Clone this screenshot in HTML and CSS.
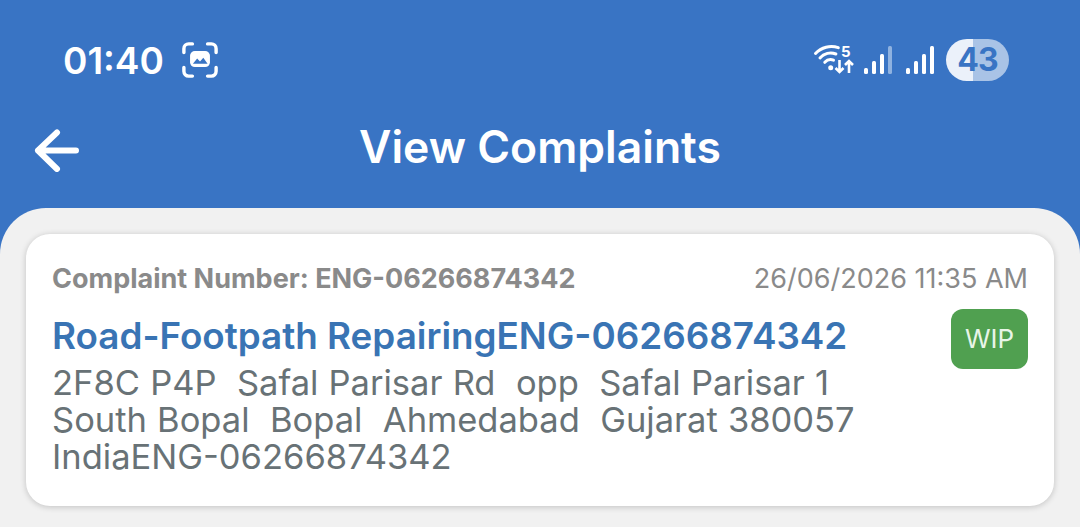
FILE: index.html
```html
<!DOCTYPE html>
<html lang="en">
<head>
    <meta charset="UTF-8">
    <meta name="viewport" content="width=device-width, initial-scale=1.0">
    <title>View Complaints</title>
    <link rel="stylesheet" href="styles.css">
</head>
<body>
    <div class="topbar">
        <div class="status">
            <span class="time">01:40</span>
            <svg class="shot" width="36" height="36" viewBox="0 0 38 38" fill="none">
                <path d="M2 11V7a5 5 0 0 1 5-5h4M27 2h4a5 5 0 0 1 5 5v4M36 27v4a5 5 0 0 1-5 5h-4M11 36H7a5 5 0 0 1-5-5v-4" stroke="#fff" stroke-width="3.6" stroke-linecap="round"/>
                <rect x="8.500" y="9.500" width="21" height="17" rx="5" fill="#fff"/>
                <path d="M11.500 23l4.500-5.500 3 3 3.500-4 4.500 6.500z" fill="#3974c4"/>
            </svg>
            <div class="status-right">
                <svg class="wifi" width="40" height="32" viewBox="0 0 40 32" fill="none">
                    <path d="M0.500 9.500A21.400 21.400 0 0 1 23.300 3.700M5 13.900A14.500 14.500 0 0 1 20.900 10M9.800 18.300A8 8 0 0 1 18.500 16.200" stroke="#fff" stroke-width="3" stroke-linecap="round"/>
                    <circle cx="15.700" cy="23.700" r="2.500" fill="#fff"/>
                    <path d="M24.500 16v12M20.500 24l4 4 4-4M34 29V17M30 21l4-4 4 4" stroke="#fff" stroke-width="2.600"/>
                    <text x="26" y="13" class="five">5</text>
                </svg>
                <svg class="bars" width="30" height="30" viewBox="0 0 30 30">
                    <rect x="0" y="23" width="4" height="6" rx="1.500" fill="#fff"/>
                    <rect x="8" y="16" width="4" height="13" rx="1.500" fill="#fff"/>
                    <rect x="16" y="9" width="4" height="20" rx="1.500" fill="#fff"/>
                    <rect x="24" y="1" width="4" height="28" rx="1.500" fill="#8fb2e0"/>
                </svg>
                <svg class="bars bars-sim" width="30" height="30" viewBox="0 0 30 30">
                    <rect x="0" y="23" width="4" height="6" rx="1.500" fill="#fff"/>
                    <rect x="8" y="16" width="4" height="13" rx="1.500" fill="#fff"/>
                    <rect x="16" y="9" width="4" height="20" rx="1.500" fill="#fff"/>
                    <rect x="24" y="1" width="4" height="28" rx="1.500" fill="#fff"/>
                </svg>
                <div class="battery">43</div>
            </div>
        </div>
        <div class="titlebar">
            <svg class="back" width="48" height="44" viewBox="0 0 48 44" fill="none">
                <path d="M42 22.500H4M23 4.500L4 22.500l19 18.500" stroke="#fff" stroke-width="6" stroke-linecap="round" stroke-linejoin="round"/>
            </svg>
            <h1>View Complaints</h1>
        </div>
    </div>

    <div class="sheet">
        <div class="card">
            <div class="card-head">
                <span class="number">Complaint Number: ENG-06266874342</span>
                <span class="date">26/06/2026 11:35 AM</span>
            </div>
            <div class="card-body">
                <div class="info">
                    <div class="subject">Road-Footpath RepairingENG-06266874342</div>
                    <p class="address">2F8C P4P&nbsp; Safal Parisar Rd&nbsp; opp&nbsp; Safal Parisar 1<br>South Bopal&nbsp; Bopal&nbsp; Ahmedabad&nbsp; Gujarat 380057<br>IndiaENG-06266874342</p>
                </div>
                <span class="badge">WIP</span>
            </div>
        </div>
    </div>
</body>
</html>
```

FILE: styles.css
```css
* {
    margin: 0;
    padding: 0;
    box-sizing: border-box;
}
body {
    width: 1080px;
    height: 527px;
    overflow: hidden;
    background: #3974c4;
    font-family: Inter, Roboto, sans-serif;
}
.topbar {
    height: 208px;
    background: #3974c4;
    color: white;
}
.status {
    display: flex;
    align-items: center;
    height: 120px;
    padding: 0 71px 0 63px;
}
.time {
    font-size: 37px;
    font-weight: 600;
}
.shot {
    margin-left: 18px;
}
.status-right {
    display: flex;
    align-items: center;
    margin-left: auto;
}
.wifi {
    overflow: visible;
}
.five {
    font-size: 15px;
    font-weight: 700;
    fill: white;
}
.bars {
    margin-left: 9px;
}
.bars-sim {
    margin-left: 12px;
}
.battery {
    width: 63px;
    height: 42px;
    margin-left: 10px;
    border-radius: 21px;
    background: linear-gradient(90deg, #ebf1fa 0, #ebf1fa 43%, #a9c3e6 43%, #a9c3e6 100%);
    color: #3974c4;
    font-size: 32px;
    font-weight: 700;
    letter-spacing: -1px;
    line-height: 42px;
    text-align: center;
}
.titlebar {
    position: relative;
    text-align: center;
}
.back {
    position: absolute;
    left: 34px;
    top: 8px;
}
h1 {
    font-size: 44.500px;
    font-weight: 600;
    line-height: 54px;
}
.sheet {
    height: 319px;
    padding: 26px;
    background: #f1f1f1;
    border-radius: 46px 46px 0 0;
}
.card {
    height: 272px;
    padding: 28px 26px 0;
    background: white;
    border-radius: 24px;
    box-shadow: 0 1px 6px rgba(0, 0, 0, 0.2);
}
.card-head {
    display: flex;
    justify-content: space-between;
    align-items: center;
    height: 32px;
}
.number {
    font-size: 27px;
    font-weight: 700;
    color: #8a8a8a;
}
.date {
    font-size: 27px;
    color: #8a8a8a;
}
.card-body {
    display: flex;
    justify-content: space-between;
    align-items: flex-start;
    margin-top: 15px;
}
.subject {
    font-size: 36.800px;
    font-weight: 600;
    line-height: 54px;
    margin-bottom: 1px;
    color: #3974b4;
}
.address {
    font-size: 34.500px;
    line-height: 37px;
    word-spacing: 0.500px;
    color: #687276;
}
.badge {
    width: 77px;
    height: 60px;
    background: #50a050;
    border-radius: 12px;
    color: #e8f5e8;
    font-size: 26px;
    line-height: 60px;
    text-align: center;
}
```
